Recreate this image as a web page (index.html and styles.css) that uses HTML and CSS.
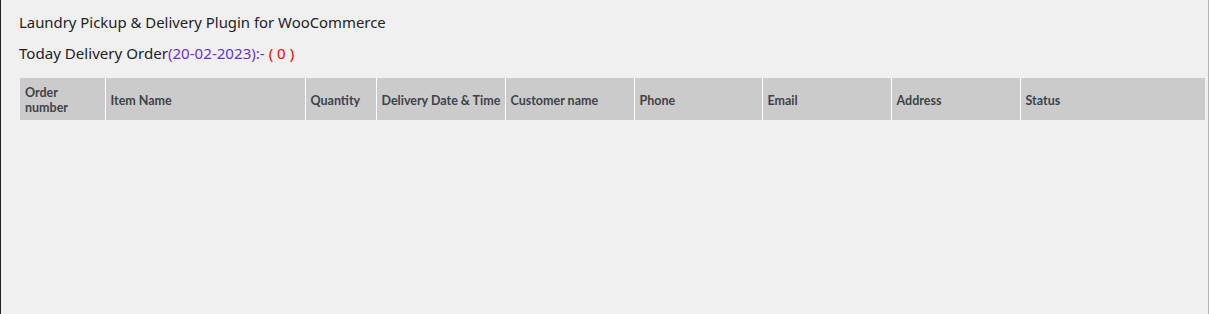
FILE: index.html
```html
<!DOCTYPE html>
<html lang="en">
<head>
  <meta charset="UTF-8">
  <meta name="viewport" content="width=device-width, initial-scale=1.0">
  <title>Laundry Pickup &amp; Delivery</title>
  <link rel="stylesheet" href="styles.css">
</head>
<body>
  <div class="wrap">
    <h1 class="title">Laundry Pickup &amp; Delivery Plugin for WooCommerce</h1>
    <h2 class="today">Today Delivery Order<span class="date">(20-02-2023):-</span> <span class="count">( 0 )</span></h2>
    <table class="orders">
      <colgroup>
        <col style="width:85px">
        <col style="width:200px">
        <col style="width:71px">
        <col style="width:129px">
        <col style="width:129px">
        <col style="width:128px">
        <col style="width:129px">
        <col style="width:129px">
        <col>
      </colgroup>
      <thead>
        <tr>
          <th>Order number</th>
          <th>Item Name</th>
          <th>Quantity</th>
          <th>Delivery Date &amp; Time</th>
          <th>Customer name</th>
          <th>Phone</th>
          <th>Email</th>
          <th>Address</th>
          <th>Status</th>
        </tr>
      </thead>
      <tbody></tbody>
    </table>
  </div>
</body>
</html>
```

FILE: styles.css
```css
*{
  margin:0;
  padding:0;
  box-sizing: border-box;
}

html, body{
  height:100%;
}

body{
  background:#f0f0f1;
  color:#1d2327;
  font-family:"Noto Sans", "Open Sans", sans-serif;
  border-left:1px solid #1d2327;
  border-right:1px solid #b4b4b4;
}

.wrap{
  padding:12px 3px 0 18px;
}

.title{
  font-size:14.9px;
  font-weight:normal;
  line-height:20px;
}

.today{
  font-size:15.1px;
  font-weight:normal;
  line-height:20px;
  margin-top:11px;
}
.today .date{color:#6633cc;}
.today .count{color:#ff0000;}

.orders{
  width:1185px;
  margin:15px 0 0 1px;
  table-layout:fixed;
  border-collapse:collapse;
}

.orders th{
  background:#cbcbcb;
  color:#3c434a;
  font-family:Lato, "Noto Sans", sans-serif;
  font-size:12.5px;
  font-weight:bold;
  line-height:15px;
  text-align:left;
  padding:2px 3px 0 5px;
  height:42px;
  border-right:1px solid #fff;
}
.orders th:last-child{border-right:none;}
```
